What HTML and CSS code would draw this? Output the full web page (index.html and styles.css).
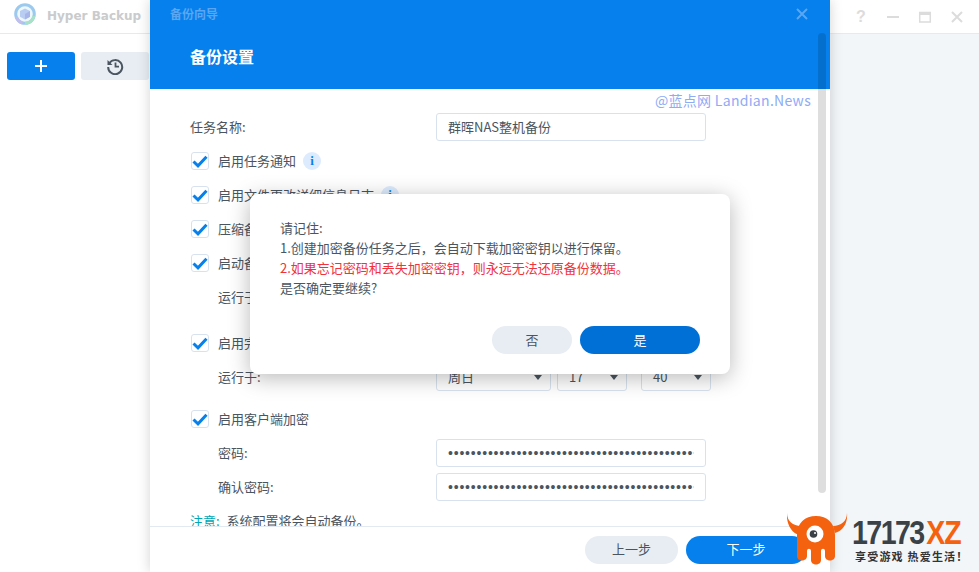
FILE: index.html
```html
<!DOCTYPE html>
<html lang="zh-CN">
<head>
    <meta charset="UTF-8">
    <title>Hyper Backup</title>
    <link rel="stylesheet" href="styles.css">
</head>
<body>
    <div class="app">
        <div class="titlebar">
            <svg class="app-logo" width="24" height="24" viewBox="0 0 24 24">
                <circle cx="12" cy="12" r="9.3" fill="#eef8fb" stroke="#9cc9ee" stroke-width="3"/>
                <path d="M21 14a9.300 9.300 0 0 1-9 7.300" fill="none" stroke="#a8e2c6" stroke-width="3"/>
                <path d="M3.500 15a9.300 9.300 0 0 0 6 6" fill="none" stroke="#c3bdec" stroke-width="3"/>
                <path d="M12 6.500l5 2.600v5.600l-5 2.800-5-2.800V9.100z" fill="#b9cdf2"/>
                <path d="M12 12l5-2.900v5.600l-5 2.800z" fill="#a7b5e8"/>
            </svg>
            <span class="app-name">Hyper Backup</span>
            <div class="win-btns">
                <span class="win-help">?</span>
                <svg width="14" height="14" viewBox="0 0 14 14"><path d="M1 7h12" stroke="#dcdcdc" stroke-width="2"/></svg>
                <svg width="14" height="14" viewBox="0 0 14 14"><path d="M1.700 2.500h10.600v9.500H1.700z" fill="none" stroke="#dcdcdc" stroke-width="1.500"/><path d="M1 3.500h12" stroke="#dcdcdc" stroke-width="3"/></svg>
                <svg width="14" height="14" viewBox="0 0 14 14"><path d="M2 2l10 10M12 2L2 12" stroke="#dcdcdc" stroke-width="2"/></svg>
            </div>
        </div>
        <div class="main">
            <div class="sidebar">
                <button class="side-btn side-add">
                    <svg width="14" height="14" viewBox="0 0 14 14"><path d="M7 1v12M1 7h12" stroke="#fff" stroke-width="2"/></svg>
                </button>
                <button class="side-btn side-history">
                    <svg width="18" height="18" viewBox="0 0 18 18">
                        <path d="M3.200 6.500A7 7 0 1 1 2.200 10" fill="none" stroke="#4a5560" stroke-width="2"/>
                        <path d="M1.500 3v5h5z" fill="#4a5560"/>
                        <path d="M9.500 5.500v4.200h3.500" fill="none" stroke="#4a5560" stroke-width="1.800"/>
                    </svg>
                </button>
            </div>
        </div>
    </div>

    <div class="wizard">
        <div class="wizard-head">
            <div class="wizard-bar">
                <span class="wizard-name">备份向导</span>
                <svg width="12" height="12" viewBox="0 0 12 12"><path d="M1 1l10 10M11 1L1 11" stroke="#5aa6f2" stroke-width="2"/></svg>
            </div>
            <h2 class="wizard-title">备份设置</h2>
        </div>
        <div class="wizard-body">
            <div class="row">
                <label class="row-label txt">任务名称:</label>
                <div class="field field-name"><span class="txt">群晖NAS整机备份</span></div>
            </div>
            <div class="row">
                <span class="check"><svg width="16" height="13" viewBox="0 0 16 13"><path d="M1.500 6.500l4.500 4.300 8.500-9" fill="none" stroke="#0580ec" stroke-width="3"/></svg></span>
                <span class="txt">启用任务通知</span>
                <span class="info">i</span>
            </div>
            <div class="row">
                <span class="check"><svg width="16" height="13" viewBox="0 0 16 13"><path d="M1.500 6.500l4.500 4.300 8.500-9" fill="none" stroke="#0580ec" stroke-width="3"/></svg></span>
                <span class="txt">启用文件更改详细信息日志</span>
                <span class="info">i</span>
            </div>
            <div class="row">
                <span class="check"><svg width="16" height="13" viewBox="0 0 16 13"><path d="M1.500 6.500l4.500 4.300 8.500-9" fill="none" stroke="#0580ec" stroke-width="3"/></svg></span>
                <span class="txt">压缩备份数据</span>
            </div>
            <div class="row">
                <span class="check"><svg width="16" height="13" viewBox="0 0 16 13"><path d="M1.500 6.500l4.500 4.300 8.500-9" fill="none" stroke="#0580ec" stroke-width="3"/></svg></span>
                <span class="txt">启动备份计划</span>
            </div>
            <div class="row row-sub">
                <label class="row-label txt">运行于:</label>
            </div>
            <div class="row row-gap-lg">
                <span class="check"><svg width="16" height="13" viewBox="0 0 16 13"><path d="M1.500 6.500l4.500 4.300 8.500-9" fill="none" stroke="#0580ec" stroke-width="3"/></svg></span>
                <span class="txt">启用完整性检查</span>
            </div>
            <div class="row row-sub">
                <label class="row-label txt">运行于:</label>
                <div class="selects">
                    <div class="field select select-day"><span class="txt">周日</span><i class="caret"></i></div>
                    <div class="field select select-num"><span class="txt">17</span><i class="caret"></i></div>
                    <div class="field select select-num select-min"><span class="txt">40</span><i class="caret"></i></div>
                </div>
            </div>
            <div class="row row-gap-md">
                <span class="check"><svg width="16" height="13" viewBox="0 0 16 13"><path d="M1.500 6.500l4.500 4.300 8.500-9" fill="none" stroke="#0580ec" stroke-width="3"/></svg></span>
                <span class="txt">启用客户端加密</span>
            </div>
            <div class="row row-sub">
                <label class="row-label txt">密码:</label>
                <input class="field pass" type="password" value="aaaaaaaaaaaaaaaaaaaaaaaaaaaaaaaaaaaaaaaaaaaaaaaaaaaaaaaaaa">
            </div>
            <div class="row row-sub">
                <label class="row-label txt">确认密码:</label>
                <input class="field pass" type="password" value="aaaaaaaaaaaaaaaaaaaaaaaaaaaaaaaaaaaaaaaaaaaaaaaaaaaaaaaaaa">
            </div>
            <div class="row">
                <span class="txt"><span class="note">注意:</span> 系统配置将会自动备份。</span>
            </div>
        </div>
        <div class="wizard-foot">
            <button class="pill pill-grey pill-prev">上一步</button>
            <button class="pill pill-blue pill-next">下一步</button>
        </div>
        <div class="scrollbar"></div>
        <div class="watermark">@蓝点网 Landian.News</div>
    </div>

    <div class="modal">
        <div class="modal-text">
            <div>请记住:</div>
            <div>1.创建加密备份任务之后，会自动下载加密密钥以进行保留。</div>
            <div class="warn">2.如果忘记密码和丢失加密密钥，则永远无法还原备份数据。</div>
            <div>是否确定要继续?</div>
        </div>
        <div class="modal-foot">
            <button class="pill pill-grey pill-no">否</button>
            <button class="pill pill-dark pill-yes">是</button>
        </div>
    </div>

    <div class="stamp">
        <svg class="stamp-logo" width="61" height="53" viewBox="0 0 61 53">
            <path d="M0 0C0 8 6 13 14 13L12 22C4 20-1 10 0 0zM60 0C60 8 54 13 46 13L48 20C56 18 61 10 60 0z" fill="#f5620f"/>
            <path d="M10 22C10 10 18 3 29 3C40 3 48 10 48 22V43C48 49 38 49 38 43V38C38 35 34 35 34 38V47C34 53 24 53 24 47V38C24 35 20 35 20 38V43C20 49 10 49 10 43z" fill="#f5620f"/>
            <circle cx="28" cy="21" r="8.500" fill="#fff"/>
            <circle cx="26.500" cy="21" r="3.800" fill="#3a4248"/>
            <circle cx="28" cy="20" r="1" fill="#fff"/>
        </svg>
        <div class="stamp-text">
            <div class="stamp-big">17173<span class="stamp-xz">XZ</span></div>
            <div class="stamp-small">享受游戏 热爱生活！</div>
        </div>
    </div>
</body>
</html>
```

FILE: styles.css
```css
* {
    box-sizing: border-box;
}
html, body {
    margin: 0;
    height: 100%;
    overflow: hidden;
}
body {
    font-family: "Noto Sans CJK SC", "Noto Sans", sans-serif;
    font-size: 13px;
    color: #4a5560;
    background: #f3f6f9;
}
button {
    font: inherit;
    border: none;
    cursor: pointer;
}
.txt {
    padding-bottom: 2px;
}

.app {
    height: 572px;
    display: flex;
    flex-direction: column;
}
.titlebar {
    height: 34px;
    background: #fff;
    border-bottom: 1px solid #e6eaef;
    display: flex;
    align-items: center;
    padding: 0 15px 0 13px;
}
.app-logo {
    margin-top: -5px;
}
.app-name {
    margin-left: 10px;
    margin-top: -1px;
    font-family: "DejaVu Sans", sans-serif;
    font-weight: bold;
    font-size: 12px;
    color: #c9cbcd;
}
.win-btns {
    margin-left: auto;
    display: flex;
    align-items: center;
    gap: 18px;
}
.win-help {
    font-family: "Liberation Sans", sans-serif;
    font-weight: bold;
    font-size: 16px;
    line-height: 16px;
    width: 14px;
    text-align: center;
    color: #dcdcdc;
}
.main {
    flex: 1;
    display: flex;
}
.sidebar {
    width: 150px;
    background: #fff;
    padding: 18px 1px 0 7px;
    display: flex;
    gap: 6px;
    align-items: flex-start;
}
.side-btn {
    width: 68px;
    height: 28px;
    border-radius: 3px;
    display: flex;
    align-items: center;
    justify-content: center;
    padding: 0;
}
.side-add {
    background: #0580ec;
}
.side-history {
    background: #e8edf4;
}

.wizard {
    position: absolute;
    left: 150px;
    top: 0;
    width: 680px;
    height: 572px;
    background: #fff;
    box-shadow: 0 0 12px rgba(0, 0, 0, 0.18);
    display: flex;
    flex-direction: column;
}
.wizard-head {
    height: 89px;
    flex: none;
    background: #0580ec;
    color: #fff;
}
.wizard-bar {
    height: 28px;
    padding: 0 22px 0 20px;
    display: flex;
    align-items: center;
    justify-content: space-between;
}
.wizard-name {
    margin-top: -2px;
    font-size: 12px;
    font-weight: bold;
    color: #5aa6f2;
}
.wizard-title {
    margin: 15px 0 0 40px;
    font-size: 16px;
    line-height: 26px;
    font-weight: bold;
}
.wizard-body {
    flex: 1;
    overflow: hidden;
    padding: 24px 0 0 40px;
    min-height: 0;
}
.row {
    display: flex;
    align-items: center;
    height: 28px;
    margin-bottom: 6px;
}
.row-gap-lg {
    margin-top: 18px;
}
.row-gap-md {
    margin-top: 14px;
}
.row-sub {
    padding-left: 28px;
}
.row-label {
    width: 246px;
    flex: none;
}
.row-sub .row-label {
    width: 218px;
}
.check {
    width: 18px;
    height: 18px;
    margin: 0 9px 0 1px;
    flex: none;
    border: 1px solid #d8e2ee;
    border-radius: 3px;
    display: flex;
    align-items: center;
    justify-content: center;
}
.info {
    width: 18px;
    height: 18px;
    margin-left: 7px;
    border-radius: 50%;
    background: #dcebfd;
    color: #0580ec;
    font-family: "Liberation Serif", serif;
    font-weight: bold;
    font-size: 13px;
    line-height: 18px;
    text-align: center;
}
.field {
    height: 28px;
    border: 1px solid #d8e2ee;
    border-radius: 3px;
    background: #fff;
    color: #4a5560;
    display: flex;
    align-items: center;
    padding: 0 11px;
}
.field-name {
    width: 270px;
}
.selects {
    display: flex;
    gap: 6px;
}
.select {
    position: relative;
}
.select-day {
    width: 115px;
}
.select-num {
    width: 70px;
}
.select-min {
    margin-left: 8px;
}
.caret {
    position: absolute;
    right: 8px;
    top: 11px;
    border: 4px solid transparent;
    border-top: 5px solid #4a5560;
    border-bottom: none;
}
.pass {
    width: 270px;
    font-family: "Liberation Sans", sans-serif;
    font-size: 14px;
    letter-spacing: 0.8px;
    outline: none;
}
.note {
    color: #00a6b4;
    margin-right: 4px;
}
.wizard-foot {
    height: 46px;
    flex: none;
    border-top: 1px solid #e3e9f0;
    background: #fff;
    display: flex;
    justify-content: flex-end;
    align-items: center;
    gap: 8px;
    padding: 0 24px 0 0;
}
.pill {
    height: 28px;
    border-radius: 14px;
    padding: 0 0 2px;
}
.pill-grey {
    background: #e8edf4;
    color: #4a5560;
}
.pill-blue {
    background: #0580ec;
    color: #fff;
}
.pill-dark {
    background: #0070d6;
    color: #fff;
}
.pill-prev {
    width: 93px;
}
.pill-next {
    width: 120px;
}
.pill-no {
    width: 80px;
}
.pill-yes {
    width: 120px;
}
.scrollbar {
    position: absolute;
    left: 668px;
    top: 33px;
    width: 8px;
    height: 460px;
    border-radius: 4px;
    background: rgba(0, 0, 0, 0.13);
}
.watermark {
    position: absolute;
    right: 19px;
    top: 90px;
    font-size: 14px;
    line-height: 20px;
    letter-spacing: 0.3px;
    color: #8fabf6;
}

.modal {
    position: absolute;
    left: 250px;
    top: 194px;
    width: 480px;
    height: 180px;
    background: #fff;
    border-radius: 8px;
    box-shadow: 0 4px 22px rgba(0, 0, 0, 0.28);
    padding: 24px 30px 20px;
    display: flex;
    flex-direction: column;
}
.modal-text {
    line-height: 20px;
}
.warn {
    color: #f0323c;
}
.modal-foot {
    margin-top: auto;
    display: flex;
    justify-content: flex-end;
    gap: 8px;
}

.stamp {
    position: absolute;
    left: 787px;
    top: 513px;
    display: flex;
}
.stamp-text {
    margin-left: 4px;
    padding-top: 3px;
}
.stamp-big {
    font-family: "Liberation Sans", sans-serif;
    font-weight: bold;
    font-size: 33px;
    line-height: 34px;
    letter-spacing: -1.800px;
    color: #3a4248;
    transform: scaleX(0.865);
    transform-origin: left;
}
.stamp-xz {
    margin-left: 3px;
    letter-spacing: -1px;
    color: #f5620f;
}
.stamp-small {
    margin-top: -1px;
    padding-left: 3px;
    font-size: 11px;
    line-height: 14px;
    letter-spacing: 1.200px;
    font-weight: bold;
    color: #333;
    white-space: nowrap;
}
```
